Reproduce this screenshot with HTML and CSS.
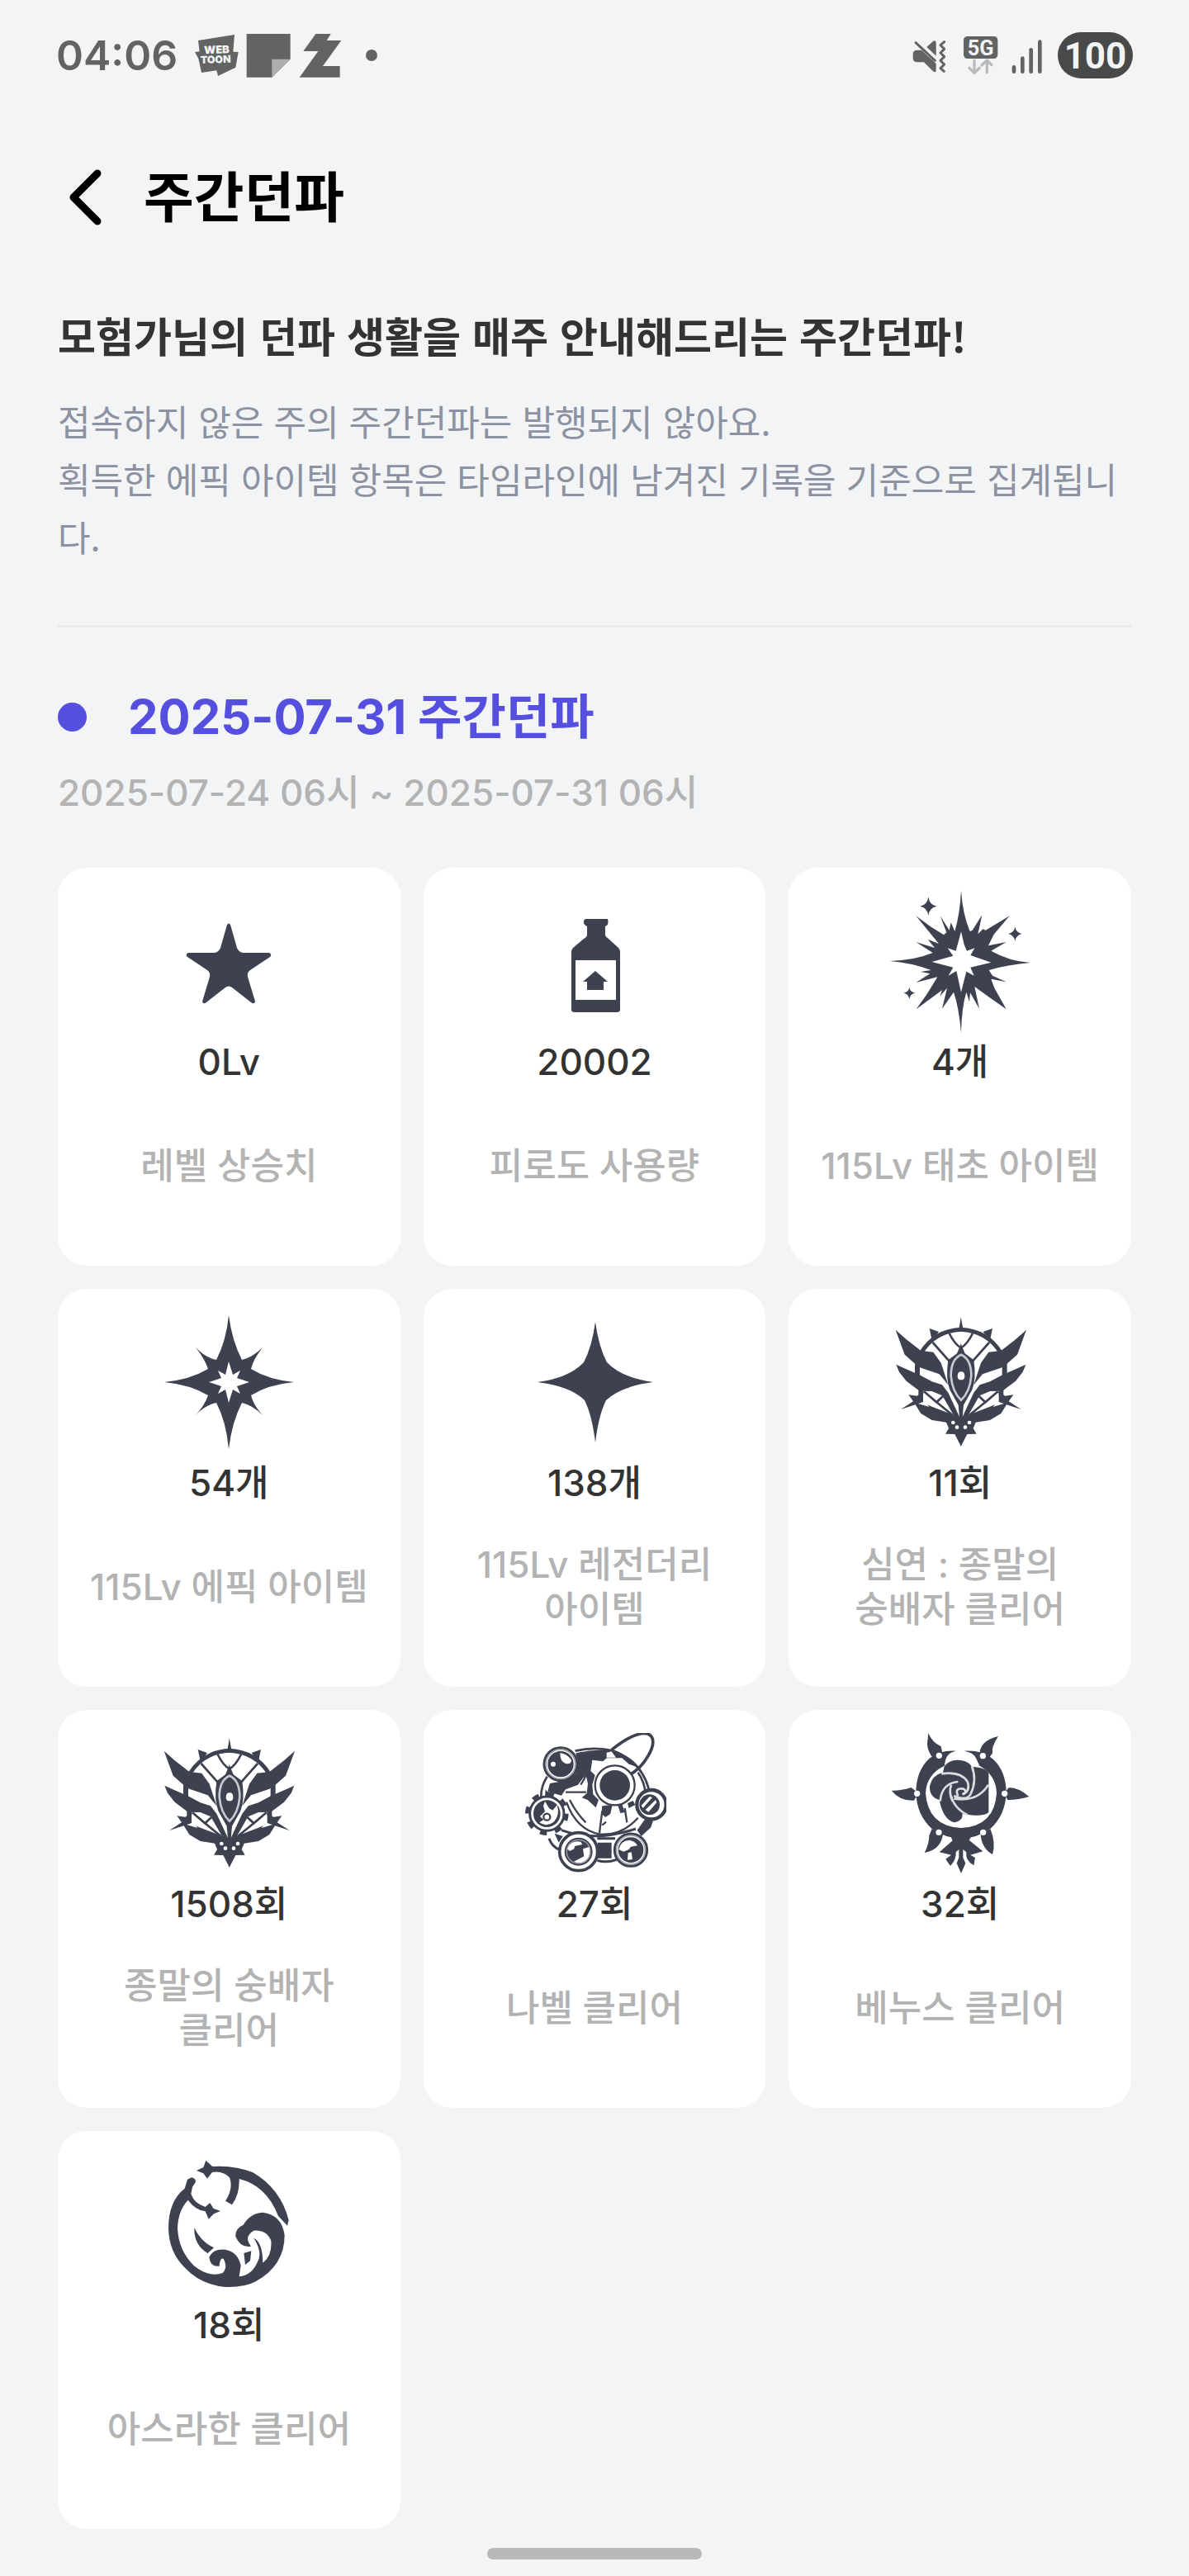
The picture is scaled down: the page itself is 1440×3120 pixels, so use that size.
FILE: index.html
```html
<!DOCTYPE html>
<html lang="ko">
<head>
<meta charset="utf-8">
<meta name="viewport" content="width=device-width, initial-scale=1">
<title>주간던파</title>
<link rel="stylesheet" href="styles.css">
</head>
<body>
<svg class="sprite" aria-hidden="true">
  <symbol id="emblem" viewBox="47 57 522 522">
    <g id="emblem-half">
      <path d="M165 207Q215 125 312 121" fill="none" stroke="currentColor" stroke-width="15"/>
      <path d="M302 124L311 75V124ZM196 117L230 129L206 164Z"/>
      <path d="M73 122L112 157L165 198L210 203L238 242L264 322L232 283L165 260L140 242L106 212Z"/>
      <path d="M75 248L105 262L160 286L205 310L242 322L264 350L306 440L285 432L246 362L205 345L160 344L112 308L86 275Z"/>
      <path d="M143 230h18v72h-18zM156 335h17v50h-17z"/>
      <path d="M92 411L137 382L120 358L150 362L176 346L165 384L205 401L280 430L311 440V546L288 501L254 500L266 480L257 458L205 450L165 426L145 394Z"/>
      <path d="M208 168L270 238M268 135Q288 175 311 188M176 346L222 385L246 362M222 385L280 432M248 362L292 438" fill="none" stroke="currentColor" stroke-width="8"/>
      <path d="M311 172L296 208L264 232Q254 300 270 340L301 395L305 442H311Z"/>
    </g>
    <use href="#emblem-half" transform="matrix(-1 0 0 1 621 0)"/>
    <path d="M311 212Q274 228 274 290Q280 350 311 377Q342 350 348 290Q348 228 311 212Z" fill="none" stroke="#c9cad0" stroke-width="8"/>
    <path d="M298 290Q298 274 311 274Q324 274 324 290Q324 304 311 304Q298 304 298 290Z" fill="#fff"/>
    <g fill="#fff"><circle cx="282" cy="459" r="7"/><circle cx="341" cy="459" r="7"/><circle cx="296" cy="476" r="7"/><circle cx="326" cy="476" r="7"/><path d="M155 390L180 383L195 402ZM467 390L442 383L427 402Z"/></g>
  </symbol>
</svg>

<div class="statusbar">
  <div class="status-group">
    <span class="clock">04:06</span>
    <svg class="ico-apps" viewBox="580 60 540 165" aria-hidden="true">
      <path fill="#626463" d="M595 87L727 66L722 128L741 129L731 185L667 216L662 196L607 204L596 153L583 129L600 127Z"/>
      <g fill="#f3f4f6" font-family="Inter, sans-serif" font-weight="900"><text x="617" y="136" font-size="39" transform="rotate(-2 617 136)">WEB</text><text x="604" y="171" font-size="37" transform="rotate(-2 604 171)">TOON</text></g>
      <path fill="#626463" d="M771 63H930V155L863 221H771Z"/><path fill="#adaeb0" d="M863 155H930L863 221Z"/>
      <path fill="#626463" d="M1022 63H1077L1062 87H1115L1048 180H1110V221H963L1031 126H977Z"/>
    </svg>
    <span class="more-dot"></span>
  </div>
  <div class="status-group status-right">
    <svg class="ico-signal" viewBox="130 60 480 150" aria-hidden="true">
      <g fill="#626463"><path d="M145 116H163L216 165V190Q214 201 205 193L172 160H145Q132 158 132 145V130Q132 118 145 116Z"/><path d="M182 105L205 84Q215 77 216 89V137Z"/></g>
      <g fill="none" stroke="#626463" stroke-linecap="round" stroke-linejoin="round"><path stroke-width="9" d="M142 89L212 154"/><path stroke-width="9" d="M246 86L232 98L246 112L232 126L246 140L232 154L246 168L232 182L245 193"/><path stroke-width="14" d="M499 178V194M530 146V194M561 115V194M593 86V194"/></g>
      <rect x="316" y="66" width="124" height="81" rx="14" fill="#626463"/>
      <text x="378" y="134" font-size="76" font-weight="700" text-anchor="middle" fill="#f3f4f6" font-family="Roboto, sans-serif">5G</text>
      <path fill="none" stroke="#b9babc" stroke-width="10" stroke-linecap="round" stroke-linejoin="round" d="M355 154V198M337 181L355 199L374 181M401 197V154M382 171L401 153L418 170"/>
    </svg>
    <span class="battery">100</span>
  </div>
</div>

<header class="appbar">
  <button class="back" type="button" aria-label="뒤로">
    <svg viewBox="0 0 40 68" aria-hidden="true"><path d="M34 5L5 34L34 63" fill="none" stroke="#000" stroke-width="9" stroke-linecap="round" stroke-linejoin="round"/></svg>
  </button>
  <h1>주간던파</h1>
</header>

<main>
  <section class="intro">
    <h2>모험가님의 던파 생활을 매주 안내해드리는 주간던파!</h2>
    <p>접속하지 않은 주의 주간던파는 발행되지 않아요.<br>획득한 에픽 아이템 항목은 타임라인에 남겨진 기록을 기준으로 집계됩니다.</p>
  </section>

  <section class="week">
    <h2>2025-07-31 주간던파</h2>
    <p class="period">2025-07-24 06시 ~ 2025-07-31 06시</p>

    <ul class="cards">
      <li class="card">
        <svg class="icon" viewBox="0 0 174 174" aria-hidden="true"><path d="M85 41Q87 38 89 41L97 69Q99 74 104 75H136Q140 77 137 80L113 96Q109 99 110 104L119 134Q118 138 114 135L91 117Q87 114 83 117L60 135Q56 138 55 134L64 104Q65 99 61 96L37 80Q34 77 38 75H70Q75 74 77 69Z"/></svg>
        <strong>0Lv</strong><span>레벨 상승치</span>
      </li>
      <li class="card">
        <svg class="icon" viewBox="0 0 174 174" aria-hidden="true"><path fill-rule="evenodd" d="M76 34H103Q105 41 100 43V54Q101 56 104 58L116 69Q118 71 118 75V144Q118 147 114 147H63Q59 147 59 144V75Q59 71 61 69L74 58Q78 56 78 53V43Q73 41 74 36ZM64 84V132H113V84ZM88 97L103 110H98V120H78V110H73Z"/></svg>
        <strong>20002</strong><span>피로도 사용량</span>
      </li>
      <li class="card">
        <svg class="icon" viewBox="107 57 522 522" aria-hidden="true"><path fill-rule="evenodd" d="M371 55Q376 140 403 204L412 200L447 145L432 214L450 196L460 200L547 148L490 215L470 256L535 243L480 275Q545 312 622 318Q540 325 472 345L485 365L535 388L480 377L492 410L535 487L475 445L420 405L437 485L404 427L401 460L390 425Q373 480 371 572Q363 480 344 425L302 485L320 410L294 440L302 418L265 445L208 487L245 435L285 370L207 390L258 358L224 351L262 345Q190 318 112 312Q200 310 268 282L207 243L275 264L250 233L290 249L207 148L260 187L308 217L318 208L295 148L328 200L334 172L348 204Q367 140 371 55ZM371 205L382 252L392 275L420 265L405 291L480 317L405 335L418 365L390 350L371 425L354 348L325 365L342 335L265 315L342 293L322 265L352 275Z"/><path d="M252 79Q256 109 282 113Q256 117 252 147Q248 117 222 113Q248 109 252 79ZM567 188Q571 209 592 213Q571 217 567 240Q563 217 542 213Q563 209 567 188ZM183 408Q186 425 204 428Q186 431 183 450Q180 431 162 428Q180 425 183 408Z"/></svg>
        <strong>4개</strong><span>115Lv 태초 아이템</span>
      </li>
      <li class="card">
        <svg class="icon" viewBox="0 0 174 174" aria-hidden="true"><path fill-rule="evenodd" d="M87 4Q91 35 103 58Q116 55 128 43Q117 57 114 69Q135 82 166 85Q135 88 114 101Q117 113 128 125Q116 113 103 110Q91 133 87 166Q84 133 72 110Q58 113 47 125Q58 113 62 101Q40 88 9 85Q40 82 62 69Q58 57 47 43Q58 55 72 58Q84 35 87 4ZM87 60L92 76L101 71L97 80L112 85L97 90L101 99L92 94L87 110L83 94L74 99L78 90L63 85L78 80L74 71L83 76Z"/></svg>
        <strong>54개</strong><span>115Lv 에픽 아이템</span>
      </li>
      <li class="card">
        <svg class="icon" viewBox="0 0 174 174" aria-hidden="true"><path d="M88 12Q92 42 102 61Q120 80 158 85Q119 90 101 107Q92 125 88 158Q84 125 75 107Q58 90 18 85Q56 80 74 61Q84 42 88 12Z"/></svg>
        <strong>138개</strong><span>115Lv 레전더리 아이템</span>
      </li>
      <li class="card">
        <svg class="icon" aria-hidden="true"><use href="#emblem"/></svg>
        <strong>11회</strong><span>심연 : 종말의 숭배자 클리어</span>
      </li>
      <li class="card">
        <svg class="icon" aria-hidden="true"><use href="#emblem"/></svg>
        <strong>1508회</strong><span>종말의 숭배자 클리어</span>
      </li>
      <li class="card">
        <svg class="icon" viewBox="69 57 522 522" aria-hidden="true">
          <g fill="none" stroke="currentColor">
            <path stroke-width="11" d="M392 118Q480 48 525 60Q560 78 525 140Q500 185 455 211"/>
            <path stroke-width="8" d="M260 122Q330 105 400 122Q500 160 527 260M488 200Q512 235 516 280M158 215Q135 250 136 290"/>
            <path stroke-width="7" d="M228 308Q265 410 350 425Q430 430 488 365M240 300Q262 345 298 382M225 272H300M300 205Q295 225 280 245M358 340L348 420M372 380L358 392M440 330L448 382"/>
            <path stroke-width="9" d="M210 410Q330 455 480 405M165 440Q175 470 205 482M340 440H405M340 520Q375 530 410 517"/>
          </g>
          <path d="M262 130Q350 112 410 125L470 158L482 180L455 170L430 148L375 148L360 160L322 155L316 195L332 210L322 245L325 280L345 300L335 328L305 300L284 292L302 276L306 240L298 208L270 245L225 262L210 284L160 270L168 240L215 232L262 205L270 165Z"/>
          <path d="M358 322L395 318L388 350L370 363L355 350ZM415 320L430 315L440 345L424 348ZM450 312L470 303L478 318L455 330ZM342 455H392V512H342ZM512 372L545 368L535 400L500 432L485 410ZM185 422L215 432L200 455ZM152 262L166 280L150 292Z"/>
          <path d="M374 128L392 124L408 146H374Z" fill="#fff"/>
          <circle cx="157" cy="350" r="69" fill="none" stroke="currentColor" stroke-width="20" stroke-dasharray="24 30"/>
          <g fill="#fff" stroke="currentColor" stroke-width="9">
            <circle cx="207" cy="170" r="60"/>
            <circle cx="157" cy="350" r="62"/>
            <circle cx="272" cy="488" r="69" stroke-width="11"/>
            <circle cx="462" cy="482" r="59"/>
            <circle cx="537" cy="317" r="53" stroke-width="13"/>
            <circle cx="404" cy="247" r="72" stroke-width="7"/>
          </g>
          <circle cx="207" cy="170" r="47"/><circle cx="157" cy="350" r="49"/><circle cx="272" cy="488" r="51"/><circle cx="462" cy="482" r="46"/><circle cx="530" cy="317" r="37"/><circle cx="404" cy="247" r="55"/>
          <g fill="#fff">
            <path d="M205 130Q230 132 246 155Q245 172 225 168Q205 162 205 130Z"/><circle cx="180" cy="170" r="9"/>
            <path d="M150 305L165 330L178 338L194 318Q206 355 182 380Q155 400 130 382L145 372L132 360L150 342L144 322Z"/>
            <path d="M230 477Q245 445 280 452L286 462L258 468L256 478L240 486ZM288 478L312 470Q318 500 300 522Q278 535 255 524L292 505Z"/>
            <path d="M418 480Q425 448 456 446Q478 450 486 466L462 470L455 480L436 488ZM452 492L464 490L468 516L450 518Z"/>
            <path d="M500 320L530 288L540 291L506 330ZM515 336L552 300L556 310L526 344Z"/>
          </g>
          <g fill="none" stroke="#9fa0a8" stroke-width="4"><circle cx="272" cy="488" r="43"/><circle cx="207" cy="170" r="53"/><circle cx="462" cy="482" r="52"/></g>
          <circle cx="157" cy="362" r="12" fill="none" stroke="currentColor" stroke-width="7"/>
        </svg>
        <strong>27회</strong><span>나벨 클리어</span>
      </li>
      <li class="card">
        <svg class="icon" viewBox="47 57 522 522" aria-hidden="true">
          <path d="M292 122Q235 118 195 150Q147 195 147 275Q150 355 205 405Q255 440 311 440Q367 440 417 405Q472 355 475 275Q475 195 425 150Q385 118 322 122Q360 128 367 152L378 176Q438 210 440 275Q433 395 311 402Q190 395 182 275Q185 208 250 176L255 152Q262 128 292 122Z"/>
          <path d="M192 57Q205 90 238 106L246 145L215 155Q188 125 188 95ZM446 69Q420 108 425 130L405 158L378 142Q375 85 446 69ZM58 266Q85 268 130 255L155 275L140 302Q90 305 58 266ZM558 288Q520 255 485 255L467 275L480 300Q520 300 558 288ZM205 405L245 425Q238 480 178 492Q195 460 195 430ZM417 405L382 425Q385 475 425 498Q438 455 417 405Z"/>
          <path d="M272 430L280 448L232 490L275 500L255 515L272 540Q295 515 292 490L303 480V510L295 530L311 567L327 530L318 510V480L330 490Q325 520 357 538L362 510L345 500L390 487L340 446L350 430Z"/>
          <path d="M250 178Q270 150 310 156Q340 160 350 180Q405 182 411 205V345Q390 365 315 350Q320 375 285 382Q245 370 232 300Q195 290 197 250Q205 210 245 200Z"/>
          <g fill="none" stroke="#dcdde1" stroke-width="8"><path d="M240 205Q310 195 335 235Q345 270 315 280M235 305Q240 240 300 234M350 178Q370 230 345 280Q330 305 285 285M410 245Q370 310 285 295M275 285Q285 330 335 355M275 245Q265 275 280 305M300 285Q285 255 320 260Q335 270 318 280"/></g>
          <g fill="#fff"><circle cx="231" cy="139" r="11"/><circle cx="390" cy="140" r="11"/><circle cx="151" cy="277" r="11"/><circle cx="469" cy="277" r="11"/><circle cx="230" cy="418" r="11"/><circle cx="391" cy="418" r="11"/></g>
        </svg>
        <strong>32회</strong><span>베누스 클리어</span>
      </li>
      <li class="card">
        <svg class="icon" viewBox="31 30 522 522" aria-hidden="true">
          <path d="M157 115Q175 120 171 133L160 150L155 175Q167 210 207 222L224 207L236 227L262 237L238 247L219 266L207 238Q170 233 144 197Q108 235 106 300Q110 380 165 435Q220 480 270 462Q290 440 273 410Q260 405 258 437Q225 440 221 405Q235 372 280 377Q325 385 336 435L330 475Q375 470 395 425Q418 390 383 335Q415 350 416 425Q450 400 446 345Q430 305 383 308Q345 330 373 365Q335 372 317 330Q315 300 345 287Q370 245 415 242Q485 250 495 325Q495 435 390 493Q350 515 280 513Q190 505 130 440Q75 385 73 300Q73 200 132 155L142 122Z"/>
          <path d="M209 53L233 75Q315 70 380 97Q480 155 510 270L505 290L472 255Q430 145 330 120Q332 175 304 214L280 200Q310 155 295 115Q270 90 232 96L214 119L200 100L175 90L200 78ZM167 298Q192 350 238 370L216 390Q165 360 167 298ZM347 390L374 382L370 418L352 432Z"/>
        </svg>
        <strong>18회</strong><span>아스라한 클리어</span>
      </li>
    </ul>
  </section>
</main>
<div class="home-indicator"></div>
</body>
</html>
```
FILE: styles.css
```css
* { box-sizing: border-box; }

body {
  margin: 0;
  background: #f3f4f6;
  color: #333;
  font-family: "Inter", "Noto Sans CJK KR", sans-serif;
  font-size: 44px;
}

h1, h2, p, ul { margin: 0; padding: 0; }

.sprite { position: absolute; width: 0; height: 0; }

.statusbar {
  display: flex;
  justify-content: space-between;
  align-items: center;
  height: 134px;
  padding: 0 68px;
}
.status-group { display: flex; align-items: center; }
.status-right { gap: 16px; }
.clock { font-size: 50px; font-weight: 600; color: #626463; }
.ico-apps { width: 180px; height: 55px; margin: 0 28px 0 20px; }
.more-dot { width: 14px; height: 14px; border-radius: 50%; background: #626463; }
.ico-signal { width: 160px; height: 50px; }
.battery {
  width: 91px;
  height: 56px;
  border-radius: 28px;
  background: #484a49;
  color: #f3f4f6;
  font-family: "Roboto", sans-serif;
  font-size: 44px;
  font-weight: 700;
  line-height: 58px;
  text-align: center;
}

.appbar {
  display: flex;
  align-items: center;
  gap: 50px;
  height: 210px;
  padding: 0 84px;
}
.back {
  display: flex;
  padding: 0;
  border: 0;
  background: none;
}
.back svg { width: 40px; height: 68px; }
.appbar h1 {
  color: #000;
  font-size: 66px;
  font-weight: 700;
  line-height: 80px;
}

main { padding: 0 70px; }

.intro {
  padding: 26px 0 73px;
  border-bottom: 3px solid #e9eaec;
  font-family: "Noto Sans CJK KR", sans-serif;
}
.intro h2 {
  margin-bottom: 34px;
  font-size: 50px;
  font-weight: 700;
  line-height: 70px;
}
.intro p {
  color: #8c92a1;
  font-size: 43px;
  font-weight: 400;
  line-height: 70px;
}

.week { padding-top: 72px; }
.week h2 {
  display: flex;
  align-items: center;
  gap: 50px;
  color: #554fe0;
  font-size: 58px;
  font-weight: 700;
  line-height: 72px;
}
.week h2::before {
  content: "";
  width: 35px;
  height: 35px;
  border-radius: 50%;
  background: #554fe0;
}
.period {
  margin: 24px 0 59px;
  color: #b3b3b3;
  font-weight: 500;
  line-height: 64px;
}

.cards {
  display: grid;
  grid-template-columns: repeat(3, 1fr);
  gap: 28px;
  list-style: none;
}
.card {
  display: flex;
  flex-direction: column;
  align-items: center;
  min-height: 482px;
  padding: 28px 20px;
  border-radius: 35px;
  background: #fff;
  text-align: center;
  word-break: keep-all;
}
.icon {
  width: 174px;
  height: 174px;
  color: #3e4150;
  fill: currentColor;
}
.card strong { font-weight: 500; line-height: 66px; }
.card span {
  display: flex;
  flex: 1;
  align-items: center;
  max-width: 364px;
  color: #b3b3b3;
  font-weight: 500;
  line-height: 54px;
}

.home-indicator {
  width: 18%;
  height: 14px;
  margin: 23px auto 18px;
  border-radius: 7px;
  background: #b9b9bb;
}
```
